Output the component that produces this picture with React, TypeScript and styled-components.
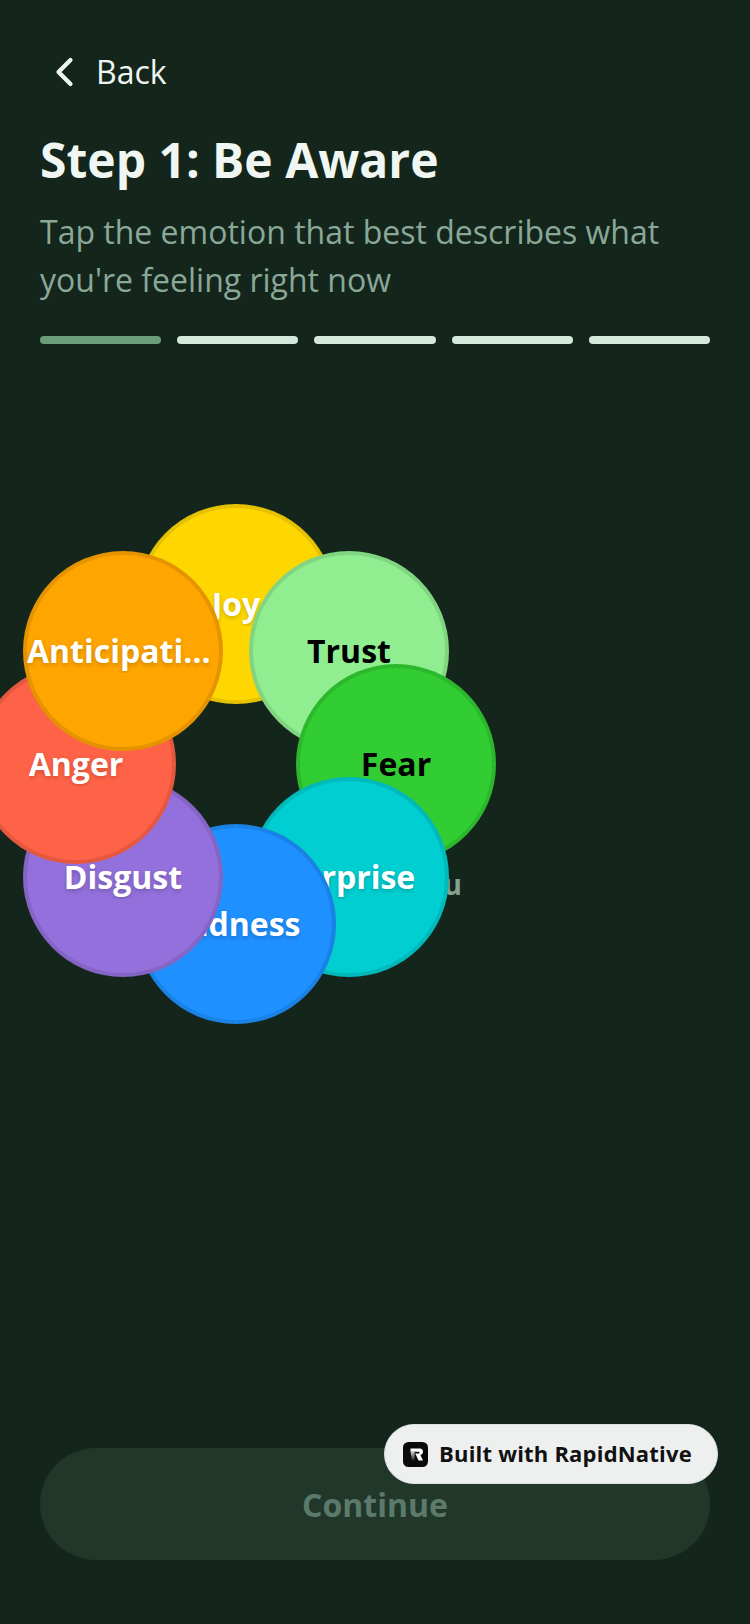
import React from 'react';
import styled, { createGlobalStyle } from 'styled-components';

const GlobalStyle = createGlobalStyle`
  html, body {
    margin: 0;
    padding: 0;
    background: #14261b;
  }
  * {
    box-sizing: border-box;
  }
`;

const Screen = styled.div`
  position: relative;
  width: 750px;
  height: 1624px;
  display: flex;
  flex-direction: column;
  padding: 0 40px 64px;
  overflow: hidden;
  background: #14261b;
  font-family: 'Open Sans', 'Noto Sans', sans-serif;
`;

const BackRow = styled.div`
  display: flex;
  align-items: center;
  gap: 22px;
  height: 48px;
  margin-top: 48px;
  padding-left: 14px;
  color: #f0f7f2;
`;

const BackLabel = styled.span`
  font-size: 32px;
  line-height: 48px;
`;

const Title = styled.h1`
  margin: 32px 0 0;
  font-size: 48px;
  line-height: 64px;
  font-weight: 700;
  color: #f0f7f2;
`;

const Subtitle = styled.p`
  margin: 16px 0 0;
  font-size: 32px;
  line-height: 48px;
  color: #8aa898;
`;

const Progress = styled.div`
  display: flex;
  gap: 16px;
  margin-top: 32px;
`;

const Segment = styled.div<{ $active?: boolean }>`
  flex: 1;
  height: 8px;
  border-radius: 4px;
  background: ${(p) => (p.$active ? '#6b9e78' : '#d4e8dc')};
`;

const Main = styled.div`
  flex: 1;
  position: relative;
`;

const Wheel = styled.div`
  position: absolute;
  left: -40px;
  top: 9px;
  width: 500px;
  height: 680px;
`;

const HiddenText = styled.span`
  position: absolute;
  right: 38px;
  top: 513px;
  font-size: 28px;
  line-height: 36px;
  font-weight: 700;
  color: #84a192;
`;

const Petal = styled.div<{ $bg: string; $x: number; $y: number }>`
  position: absolute;
  left: ${(p) => p.$x - 100}px;
  top: ${(p) => p.$y - 100}px;
  width: 200px;
  height: 200px;
  border-radius: 50%;
  border: 4px solid rgba(0, 0, 0, 0.1);
  background: ${(p) => p.$bg};
  display: flex;
  align-items: center;
  justify-content: center;
`;

const PetalLabel = styled.span<{ $dark?: boolean; $long?: boolean }>`
  max-width: 184px;
  margin-right: ${(p) => (p.$long ? '8px' : '0')};
  overflow: hidden;
  white-space: nowrap;
  text-overflow: ellipsis;
  font-size: 32px;
  line-height: 44px;
  font-weight: 700;
  color: ${(p) => (p.$dark ? '#000000' : '#ffffff')};
  text-shadow: ${(p) => (p.$dark ? 'none' : '0 2px 4px rgba(0, 0, 0, 0.2)')};
`;

const ContinueButton = styled.div`
  height: 112px;
  border-radius: 56px;
  background: #21372a;
  display: flex;
  align-items: center;
  justify-content: center;
  font-size: 32px;
  font-weight: 700;
  color: #5c7a6b;
`;

const Badge = styled.div`
  position: absolute;
  left: 384px;
  top: 1424px;
  width: 334px;
  height: 60px;
  border-radius: 30px;
  border: 1px solid #dde1e0;
  background: #eef0f0;
  display: flex;
  align-items: center;
  gap: 11px;
  padding-left: 18px;
  font-size: 22px;
  font-weight: 700;
  letter-spacing: 0.2px;
  color: #111111;
`;

const BadgeLabel = styled.span`
  margin-bottom: 2px;
`;

const emotions = [
  { name: 'Joy', bg: '#ffd700', x: 236, y: 251 },
  { name: 'Trust', bg: '#90ee90', x: 349, y: 298, dark: true },
  { name: 'Fear', bg: '#32cd32', x: 396, y: 411, dark: true },
  { name: 'Surprise', bg: '#00ced1', x: 349, y: 524 },
  { name: 'Sadness', bg: '#1e90ff', x: 236, y: 571 },
  { name: 'Disgust', bg: '#9370db', x: 123, y: 524 },
  { name: 'Anger', bg: '#ff6347', x: 76, y: 411 },
  { name: 'Anticipation', bg: '#ffa500', x: 123, y: 298, long: true },
];

export default function App() {
  return (
    <>
      <GlobalStyle />
      <Screen>
        <BackRow>
          <svg width="20" height="30" viewBox="0 0 20 30" fill="none">
            <path d="M16.5 3 L4.5 15 L16.5 27" stroke="#f0f7f2" strokeWidth="4.2" strokeLinecap="round" strokeLinejoin="round" />
          </svg>
          <BackLabel>Back</BackLabel>
        </BackRow>
        <Title>Step 1: Be Aware</Title>
        <Subtitle>Tap the emotion that best describes what you're feeling right now</Subtitle>
        <Progress>
          <Segment $active />
          <Segment />
          <Segment />
          <Segment />
          <Segment />
        </Progress>
        <Main>
          <Wheel>
            <HiddenText>you</HiddenText>
            {emotions.map((e) => (
              <Petal key={e.name} $bg={e.bg} $x={e.x} $y={e.y}>
                <PetalLabel $dark={e.dark} $long={e.long}>{e.name}</PetalLabel>
              </Petal>
            ))}
          </Wheel>
        </Main>
        <ContinueButton>Continue</ContinueButton>
        <Badge>
          <svg width="25" height="25" viewBox="0 0 25 25">
            <defs>
              <linearGradient id="rapidStem" x1="0" y1="0" x2="0" y2="1">
                <stop offset="0" stopColor="#d0d0d0" />
                <stop offset="1" stopColor="#1a1a1a" />
              </linearGradient>
            </defs>
            <rect width="25" height="25" rx="5.5" fill="#0a0a0a" />
            <path d="M7.5 6.5 H17 C19 6.5 20 8 20 9.8 C20 11.4 19 12.6 17.4 13 L20 18.5 H15.6 L12.2 11.6 H15.8 C16.8 11.6 16.8 9.8 15.8 9.8 H7.5 Z" fill="#ffffff" />
            <path d="M7.5 9.8 H11.6 L11.6 18.5 H8.8 Z" fill="url(#rapidStem)" />
          </svg>
          <BadgeLabel>Built with RapidNative</BadgeLabel>
        </Badge>
      </Screen>
    </>
  );
}
